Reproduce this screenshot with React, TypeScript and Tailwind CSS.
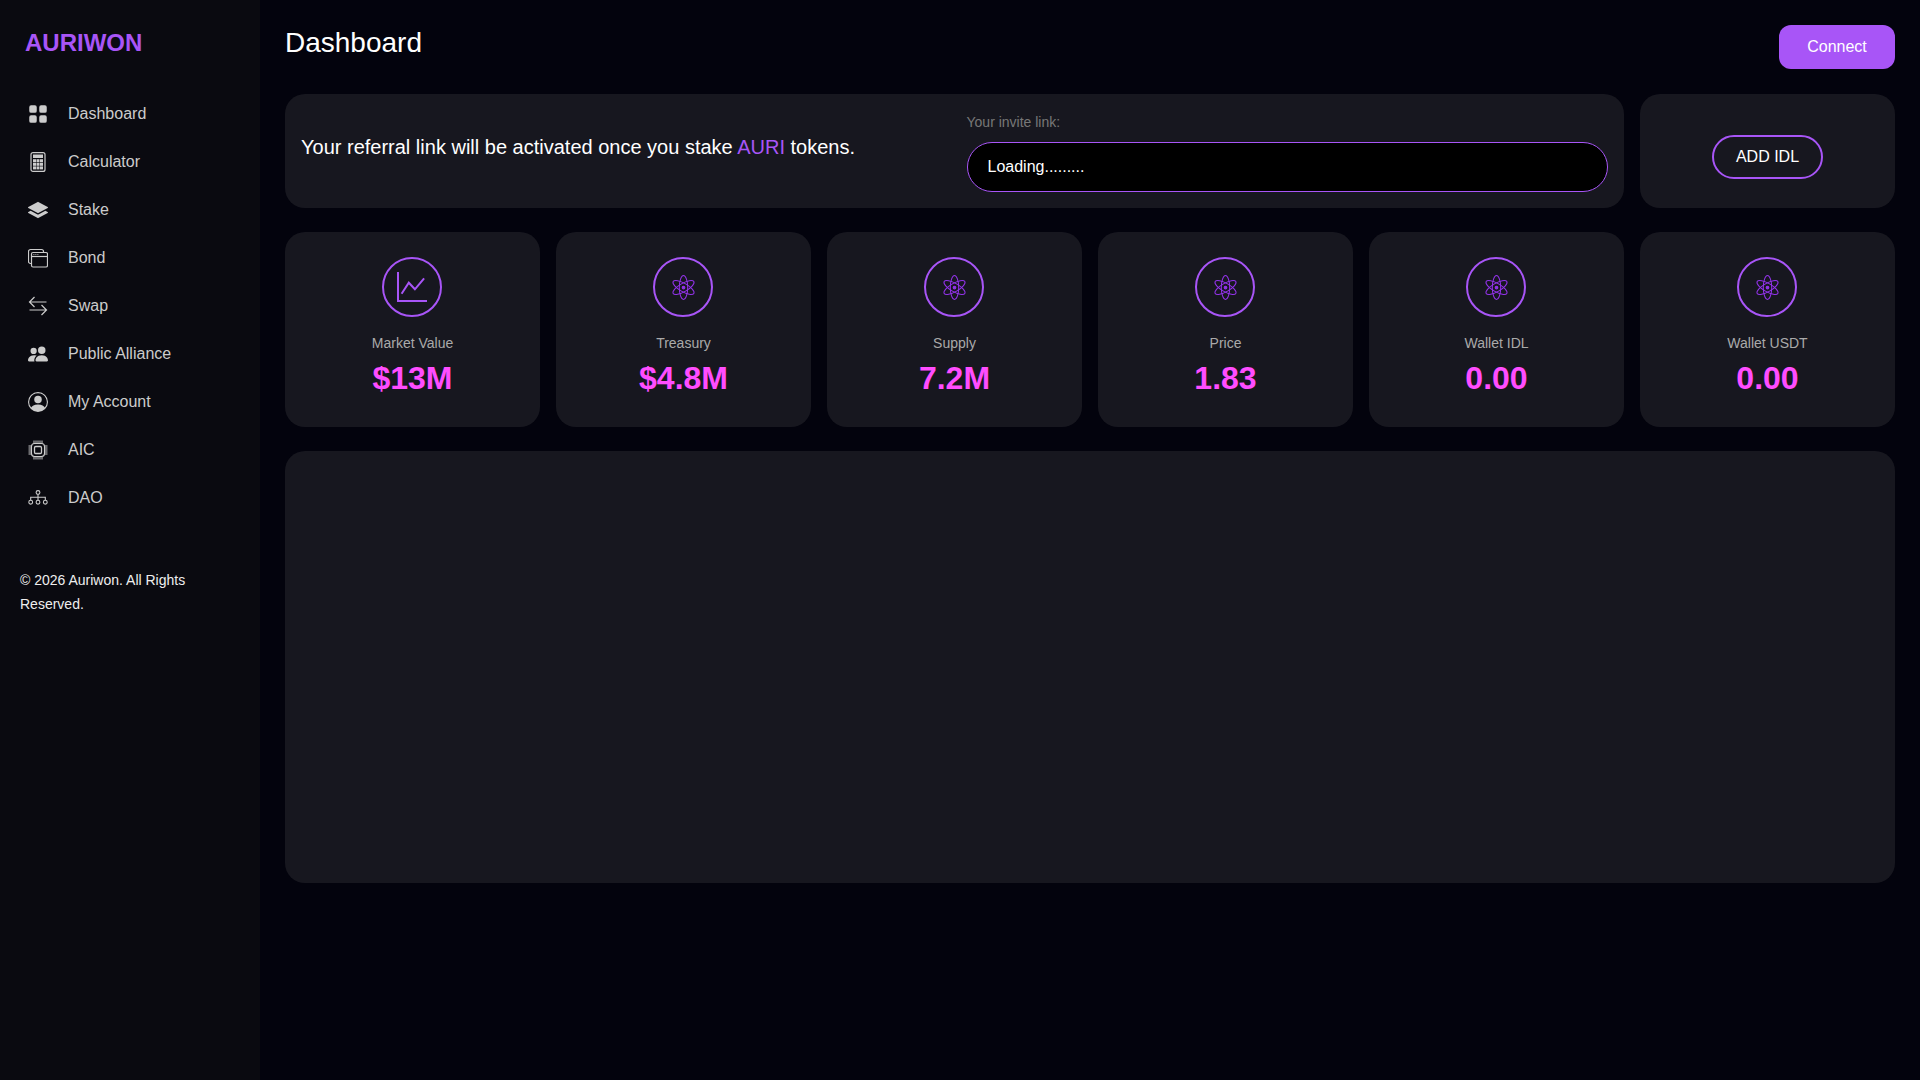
import { BsGridFill, BsLayersFill, BsPeopleFill, BsPersonCircle } from "react-icons/bs";

function CalculatorIcon() {
  const keys = [0, 1, 2];
  return (
    <svg width="20" height="20" viewBox="0 0 20 20" fill="currentColor">
      <rect x="3" y="0.6" width="14" height="18.8" rx="2" fill="none" stroke="currentColor" strokeWidth="1.2" />
      <rect x="5" y="2.5" width="10" height="3.5" />
      {keys.map((r) =>
        keys.map((c) => (
          <rect key={`${r}-${c}`} x={5 + c * 3.5} y={7.2 + r * 3.6} width="3" height="3" />
        ))
      )}
    </svg>
  );
}

function WindowsIcon() {
  return (
    <svg width="20" height="20" viewBox="0 0 20 20" fill="none" stroke="currentColor" strokeWidth="1.2">
      <path d="M3 15.5h-.5A2 2 0 0 1 .5 13.5V3.5a2 2 0 0 1 2-2h11a2 2 0 0 1 2 2v1" />
      <rect x="3.5" y="4.5" width="16" height="14.5" rx="1.5" />
      <path d="M3.5 8.5h16" />
      <path d="M5.5 6.5h.8M7.5 6.5h.8M9.5 6.5h.8" />
    </svg>
  );
}

function SwapIcon() {
  return (
    <svg width="20" height="20" viewBox="0 0 20 20" fill="none" stroke="currentColor" strokeWidth="1.2">
      <path d="M18.5 6H1.5M6.5 1 1.5 6l5 5" />
      <path d="M1.5 14h17M13.5 9l5 5-5 5" />
    </svg>
  );
}

function ChipIcon() {
  const pins = [6, 8, 10, 12, 14];
  return (
    <svg width="20" height="20" viewBox="0 0 20 20" fill="none" stroke="currentColor" strokeWidth="1.1">
      <rect x="3.5" y="3.5" width="13" height="13" rx="3" />
      <rect x="6.5" y="6.5" width="7" height="7" rx="1.2" strokeWidth="1.3" />
      {pins.map((p) => (
        <path key={p} d={`M${p} 0.5v3M${p} 16.5v3M0.5 ${p}h3M16.5 ${p}h3`} strokeWidth="1" />
      ))}
    </svg>
  );
}

function TreeIcon() {
  return (
    <svg width="20" height="20" viewBox="0 0 20 20" fill="none" stroke="currentColor" strokeWidth="1.1">
      <circle cx="10" cy="4.5" r="1.9" />
      <path d="M10 6.4v5.8M2.7 12.2v-3h14.6v3" />
      <circle cx="2.7" cy="14.2" r="1.9" />
      <circle cx="10" cy="14.2" r="1.9" />
      <circle cx="17.3" cy="14.2" r="1.9" />
    </svg>
  );
}

function ChartIcon() {
  return (
    <svg width="30" height="30" viewBox="0 0 30 30" fill="none" stroke="#a855f7" strokeWidth="2">
      <path d="M1 0v29h29" />
      <path d="M4.6 21.7 11.8 10.7 17.9 17.3 27.1 6.3" />
    </svg>
  );
}

function AtomIcon() {
  return (
    <svg width="25" height="25" viewBox="0 0 22 22" fill="none" stroke="#9333ea" strokeWidth="0.9">
      <ellipse cx="11" cy="11" rx="3.7" ry="10.5" />
      <ellipse cx="11" cy="11" rx="3.7" ry="10.5" transform="rotate(60 11 11)" />
      <ellipse cx="11" cy="11" rx="3.7" ry="10.5" transform="rotate(-60 11 11)" />
      <circle cx="11" cy="11" r="1.2" fill="#9333ea" />
    </svg>
  );
}

const navItems = [
  { label: "Dashboard", icon: <BsGridFill size={20} /> },
  { label: "Calculator", icon: <CalculatorIcon /> },
  { label: "Stake", icon: <BsLayersFill size={20} /> },
  { label: "Bond", icon: <WindowsIcon /> },
  { label: "Swap", icon: <SwapIcon /> },
  { label: "Public Alliance", icon: <BsPeopleFill size={20} /> },
  { label: "My Account", icon: <BsPersonCircle size={20} /> },
  { label: "AIC", icon: <ChipIcon /> },
  { label: "DAO", icon: <TreeIcon /> },
];

const stats = [
  { label: "Market Value", value: "$13M", icon: <ChartIcon /> },
  { label: "Treasury", value: "$4.8M", icon: <AtomIcon /> },
  { label: "Supply", value: "7.2M", icon: <AtomIcon /> },
  { label: "Price", value: "1.83", icon: <AtomIcon /> },
  { label: "Wallet IDL", value: "0.00", icon: <AtomIcon /> },
  { label: "Wallet USDT", value: "0.00", icon: <AtomIcon /> },
];

export default function App() {
  return (
    <div className="flex min-h-screen bg-[#03030d] font-['Liberation_Sans',Arial,sans-serif] text-white">
      {/* Sidebar */}
      <aside className="w-[260px] shrink-0 bg-[#0a0a10]">
        <div className="pl-[25px] pt-[29px] text-[24px] leading-[28px] font-bold text-[#a855f7]">AURIWON</div>
        <nav className="mt-[33px]">
          {navItems.map((item) => (
            <div key={item.label} className="flex h-[48px] items-center gap-5 pl-[28px] text-[16px] text-[#cccccc]">
              {item.icon}
              <span>{item.label}</span>
            </div>
          ))}
        </nav>
        <p className="mt-[46px] px-5 text-[14px] leading-[24px] text-[#eeeeee]">
          © 2026 Auriwon. All Rights Reserved.
        </p>
      </aside>

      {/* Main */}
      <main className="flex-1 px-[25px] pt-[25px]">
        <div className="flex items-start justify-between">
          <h1 className="text-[28px] leading-[36px]">Dashboard</h1>
          <button className="h-[44px] w-[116px] rounded-[12px] bg-[#a855f7] text-[16px]">Connect</button>
        </div>

        <div className="mt-[25px] grid grid-cols-6 gap-4">
          <div className="col-span-5 grid h-[114px] grid-cols-2 gap-6 rounded-[20px] bg-[#17171f] p-4">
            <p className="pt-[22px] text-[20px] leading-[30px]">
              Your referral link will be activated once you stake <span className="text-[#a855f7]">AURI</span> tokens.
            </p>
            <div className="pt-[2px]">
              <div className="text-[14px] leading-[21px] text-[#777777]">Your invite link:</div>
              <div className="mt-[9px] flex h-[50px] items-center rounded-full border border-[#a855f7] bg-black px-5 text-[16px]">
                Loading.........
              </div>
            </div>
          </div>
          <div className="flex h-[114px] justify-center rounded-[20px] bg-[#17171f] pt-[41px]">
            <button className="h-[44px] w-[111px] rounded-full border-2 border-[#a855f7] text-[16px]">ADD IDL</button>
          </div>
        </div>

        <div className="mt-[24px] grid grid-cols-6 gap-4">
          {stats.map((s) => (
            <div key={s.label} className="flex h-[195px] flex-col items-center rounded-[20px] bg-[#17171f] pt-[25px]">
              <div className="mr-[1px] flex h-[60px] w-[60px] items-center justify-center rounded-full border-2 border-[#a855f7]">
                {s.icon}
              </div>
              <div className="mt-[16px] text-[14px] leading-[21px] text-[#aaaaaa]">{s.label}</div>
              <div className="mt-[4px] text-[32px] leading-[40px] font-bold text-[#ff4dff]">{s.value}</div>
            </div>
          ))}
        </div>

        <div className="mt-[24px] h-[432px] rounded-[20px] bg-[#17171f]" />
      </main>
    </div>
  );
}
